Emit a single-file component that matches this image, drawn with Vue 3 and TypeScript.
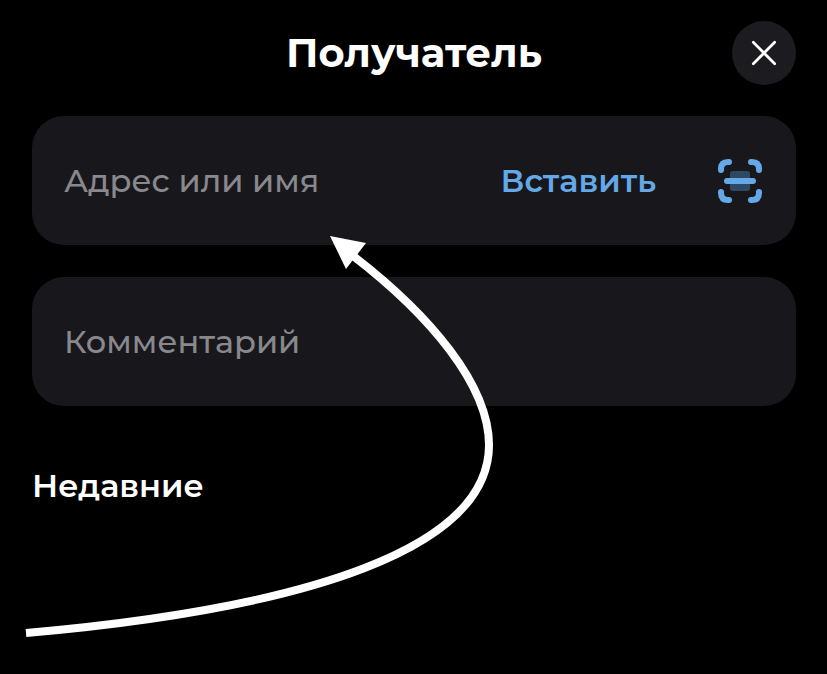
<script setup lang="ts">
import { ref } from 'vue'

const address = ref('')
const comment = ref('')

async function paste(): Promise<void> {
  address.value = await navigator.clipboard.readText()
}
</script>

<template>
  <main class="sheet">
    <header class="header">
      <h1 class="title">Получатель</h1>
      <button class="close" type="button" aria-label="Закрыть">
        <svg width="64" height="64" viewBox="0 0 64 64" aria-hidden="true">
          <path d="M21.3 21.3 42.7 42.7M42.7 21.3 21.3 42.7" />
        </svg>
      </button>
    </header>

    <form class="form" @submit.prevent>
      <div class="field">
        <input v-model="address" class="input" type="text" placeholder="Адрес или имя" aria-label="Адрес или имя" />
        <button class="paste" type="button" @click="paste">Вставить</button>
        <button class="scan" type="button" aria-label="Сканировать">
          <svg width="44" height="44" viewBox="0 0 44 44" aria-hidden="true">
            <rect class="scan-fill" x="12" y="12" width="20" height="20" rx="3" />
            <path d="M3 11V10Q3 3 10 3H11M33 3H34Q41 3 41 10V11M41 33V34Q41 41 34 41H33M11 41H10Q3 41 3 34V33M9 22H35" />
          </svg>
        </button>
      </div>
      <div class="field">
        <input v-model="comment" class="input" type="text" placeholder="Комментарий" aria-label="Комментарий" />
      </div>
    </form>

    <h2 class="subtitle">Недавние</h2>

    <svg class="pointer" width="480" height="410" viewBox="20 230 480 410" aria-hidden="true">
      <path class="pointer-line" d="M352 255C430 315 489 385 489 445C489 548 310 608 26 633" />
      <path class="pointer-head" d="M330 236 366 243 346 269Z" />
    </svg>
  </main>
</template>

<style>
body {
  background: #000;
}
</style>

<style scoped>
.sheet {
  position: relative;
  box-sizing: border-box;
  min-height: 100vh;
  padding: 21px 31px 32px 32px;
  overflow: hidden;
  color: #fff;
  background: #000;
  font-family: Montserrat, Inter, "Noto Sans", sans-serif;
}

.header {
  display: grid;
  grid-template-columns: 64px 1fr 64px;
  align-items: center;
}

.title {
  grid-column: 2;
  margin: 0;
  font-size: 40px;
  font-weight: 700;
  line-height: 64px;
  text-align: center;
}

button {
  padding: 0;
  border: 0;
  background: none;
  font: inherit;
  cursor: pointer;
}

button svg {
  display: block;
}

.close {
  border-radius: 50%;
  background: #1c1c20;
}

.close path {
  fill: none;
  stroke: #fff;
  stroke-width: 2.7;
  stroke-linecap: round;
}

.form {
  display: grid;
  grid-template-columns: minmax(0, 1fr);
  gap: 32px;
  margin-top: 31px;
}

.field {
  display: flex;
  align-items: center;
  box-sizing: border-box;
  min-height: 129px;
  padding: 0 34px 0 32px;
  border-radius: 32px;
  background: #18181c;
}

.input {
  flex: 1;
  min-width: 0;
  height: 64px;
  padding: 0;
  border: 0;
  outline: 0;
  color: #fff;
  background: none;
  font: inherit;
  font-size: 32px;
  font-weight: 500;
}

.input::placeholder {
  color: #88888d;
  opacity: 1;
}

.paste {
  color: #64a8e8;
  font-size: 32px;
  font-weight: 600;
  line-height: 64px;
}

.scan {
  margin-left: 62px;
}

.scan path {
  fill: none;
  stroke: #64a8e8;
  stroke-width: 6;
  stroke-linecap: round;
}

.scan-fill {
  fill: #2d4964;
}

.subtitle {
  margin: 60px 0 0;
  font-size: 32px;
  font-weight: 600;
  line-height: 40px;
}

.pointer {
  position: absolute;
  top: 230px;
  left: 20px;
  pointer-events: none;
}

.pointer-line {
  fill: none;
  stroke: #fff;
  stroke-width: 8;
}

.pointer-head {
  fill: #fff;
}
</style>
